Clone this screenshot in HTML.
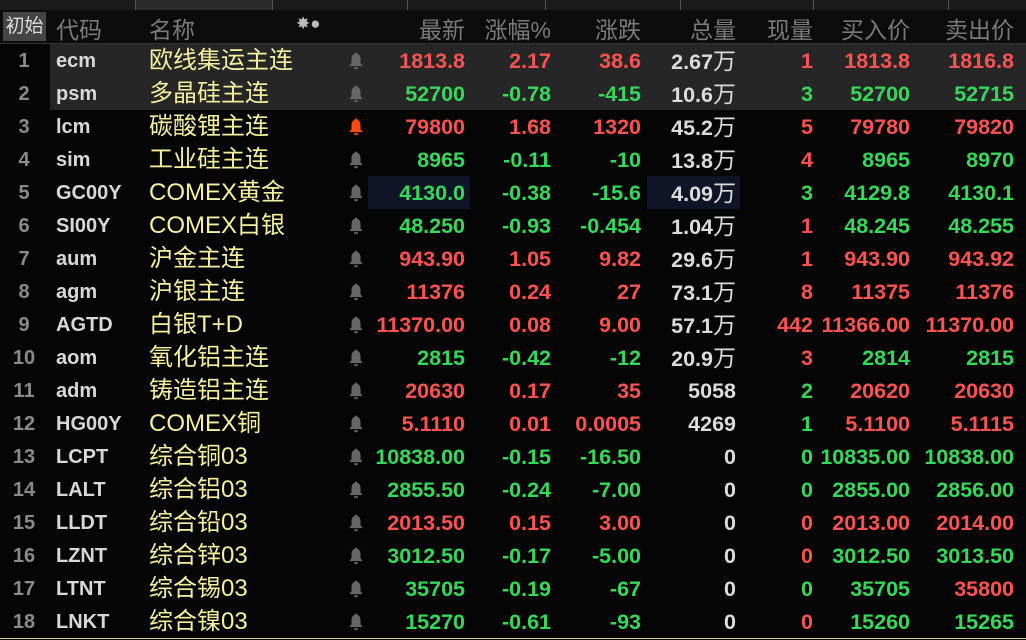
<!DOCTYPE html><html><head><meta charset="utf-8"><style>
body{margin:0;width:1026px;height:640px;background:#050505;overflow:hidden;font-family:"Liberation Sans","Noto Sans CJK SC",sans-serif;position:relative}
.tabs{position:absolute;left:0;top:0;width:1026px;height:10px;background:#1a1a1a}
.tab{position:absolute;top:0;height:10px;border-left:1px solid #555}
.hd{position:absolute;left:0;top:10px;width:1026px;height:33px;background:#0c0c0c;border-bottom:1px solid #333;color:#7a7a7a;font-size:23px}
.hd span,.row span{position:absolute;white-space:nowrap}
.hd span{top:1px}
.row{position:absolute;left:0;width:1026px;height:33px;font-size:21.5px;font-weight:bold;line-height:34px}
.hl{background:#262626;position:absolute;left:50px;top:0;width:976px;height:33px}
.i{left:0;width:48px;text-align:center;color:#8a8a8a;font-size:20px}
.c{left:56px;color:#d8d8d8;font-size:20px}
.nm{left:149px;color:#f4f0a0;font-weight:normal;font-size:24px}
.b{position:absolute;left:348px;top:8px;width:16px;height:18px}
.c1{right:561px}.c2{right:475px}.c3{right:385px}.c4{right:290px;color:#dcdcdc}.c5{right:213px}.c6{right:116px}.c7{right:12px}
.w{font-weight:normal;font-size:23px}
.r{color:#ff5252}.g{color:#35d85a}
.box{position:absolute;top:0;height:33px;background:#0f1526}
</style></head><body>
<div class="tabs"><div class="tab" style="left:135px;width:136px;background:#2a2a2a;border-right:1px solid #555"></div><div class="tab" style="left:407px"></div><div class="tab" style="left:545px"></div><div class="tab" style="left:680px"></div><div class="tab" style="left:813px"></div><div class="tab" style="left:948px"></div></div>
<div class="hd">
<span style="left:3px;top:2px;width:43px;height:29px;background:#444;color:#ddd;font-size:19px;line-height:29px;text-align:center">初始</span>
<span style="left:56px">代码</span><span style="left:149px">名称</span>
<span style="left:296px;top:4px;font-size:17px;color:#bbb">✸●</span>
<span style="right:561px">最新</span><span style="right:475px">涨幅%</span><span style="right:385px">涨跌</span><span style="right:290px">总量</span><span style="right:213px">现量</span><span style="right:116px">买入价</span><span style="right:12px">卖出价</span>
</div>
<svg width="0" height="0" style="position:absolute"><defs><symbol id="bell" viewBox="0 0 14 16"><path d="M7 0.5c-.8 0-1.2.6-1.2 1.2C3.8 2.4 3 4.2 3 6.5v3.5L1 12.5h12l-2-2.5V6.5c0-2.3-.8-4.1-2.8-4.8C8.2 1.1 7.8.5 7 .5zM5.2 13.5a1.8 1.8 0 0 0 3.6 0z" fill="currentColor"/></symbol></defs></svg>

<div class="row" style="top:44px"><div class="hl"></div><span class="i">1</span><span class="c">ecm</span><span class="nm">欧线集运主连</span><svg class="b" style="color:#666"><use href="#bell"/></svg><span class="c1 r">1813.8</span><span class="c2 r">2.17</span><span class="c3 r">38.6</span><span class="c4">2.67<span class="w" style="position:static">万</span></span><span class="c5 r">1</span><span class="c6 r">1813.8</span><span class="c7 r">1816.8</span></div>
<div class="row" style="top:77px"><div class="hl"></div><span class="i">2</span><span class="c">psm</span><span class="nm">多晶硅主连</span><svg class="b" style="color:#666"><use href="#bell"/></svg><span class="c1 g">52700</span><span class="c2 g">-0.78</span><span class="c3 g">-415</span><span class="c4">10.6<span class="w" style="position:static">万</span></span><span class="c5 g">3</span><span class="c6 g">52700</span><span class="c7 g">52715</span></div>
<div class="row" style="top:110px"><span class="i">3</span><span class="c">lcm</span><span class="nm">碳酸锂主连</span><svg class="b" style="color:#ff4a10"><use href="#bell"/></svg><span class="c1 r">79800</span><span class="c2 r">1.68</span><span class="c3 r">1320</span><span class="c4">45.2<span class="w" style="position:static">万</span></span><span class="c5 r">5</span><span class="c6 r">79780</span><span class="c7 r">79820</span></div>
<div class="row" style="top:143px"><span class="i">4</span><span class="c">sim</span><span class="nm">工业硅主连</span><svg class="b" style="color:#666"><use href="#bell"/></svg><span class="c1 g">8965</span><span class="c2 g">-0.11</span><span class="c3 g">-10</span><span class="c4">13.8<span class="w" style="position:static">万</span></span><span class="c5 r">4</span><span class="c6 g">8965</span><span class="c7 g">8970</span></div>
<div class="row" style="top:176px"><div class="box" style="left:368px;width:102px"></div><div class="box" style="left:647px;width:93px"></div><span class="i">5</span><span class="c">GC00Y</span><span class="nm">COMEX黄金</span><svg class="b" style="color:#666"><use href="#bell"/></svg><span class="c1 g">4130.0</span><span class="c2 g">-0.38</span><span class="c3 g">-15.6</span><span class="c4">4.09<span class="w" style="position:static">万</span></span><span class="c5 g">3</span><span class="c6 g">4129.8</span><span class="c7 g">4130.1</span></div>
<div class="row" style="top:209px"><span class="i">6</span><span class="c">SI00Y</span><span class="nm">COMEX白银</span><svg class="b" style="color:#666"><use href="#bell"/></svg><span class="c1 g">48.250</span><span class="c2 g">-0.93</span><span class="c3 g">-0.454</span><span class="c4">1.04<span class="w" style="position:static">万</span></span><span class="c5 r">1</span><span class="c6 g">48.245</span><span class="c7 g">48.255</span></div>
<div class="row" style="top:242px"><span class="i">7</span><span class="c">aum</span><span class="nm">沪金主连</span><svg class="b" style="color:#666"><use href="#bell"/></svg><span class="c1 r">943.90</span><span class="c2 r">1.05</span><span class="c3 r">9.82</span><span class="c4">29.6<span class="w" style="position:static">万</span></span><span class="c5 r">1</span><span class="c6 r">943.90</span><span class="c7 r">943.92</span></div>
<div class="row" style="top:275px"><span class="i">8</span><span class="c">agm</span><span class="nm">沪银主连</span><svg class="b" style="color:#666"><use href="#bell"/></svg><span class="c1 r">11376</span><span class="c2 r">0.24</span><span class="c3 r">27</span><span class="c4">73.1<span class="w" style="position:static">万</span></span><span class="c5 r">8</span><span class="c6 r">11375</span><span class="c7 r">11376</span></div>
<div class="row" style="top:308px"><span class="i">9</span><span class="c">AGTD</span><span class="nm">白银T+D</span><svg class="b" style="color:#666"><use href="#bell"/></svg><span class="c1 r">11370.00</span><span class="c2 r">0.08</span><span class="c3 r">9.00</span><span class="c4">57.1<span class="w" style="position:static">万</span></span><span class="c5 r">442</span><span class="c6 r">11366.00</span><span class="c7 r">11370.00</span></div>
<div class="row" style="top:341px"><span class="i">10</span><span class="c">aom</span><span class="nm">氧化铝主连</span><svg class="b" style="color:#666"><use href="#bell"/></svg><span class="c1 g">2815</span><span class="c2 g">-0.42</span><span class="c3 g">-12</span><span class="c4">20.9<span class="w" style="position:static">万</span></span><span class="c5 r">3</span><span class="c6 g">2814</span><span class="c7 g">2815</span></div>
<div class="row" style="top:374px"><span class="i">11</span><span class="c">adm</span><span class="nm">铸造铝主连</span><svg class="b" style="color:#666"><use href="#bell"/></svg><span class="c1 r">20630</span><span class="c2 r">0.17</span><span class="c3 r">35</span><span class="c4">5058</span><span class="c5 g">2</span><span class="c6 r">20620</span><span class="c7 r">20630</span></div>
<div class="row" style="top:407px"><span class="i">12</span><span class="c">HG00Y</span><span class="nm">COMEX铜</span><svg class="b" style="color:#666"><use href="#bell"/></svg><span class="c1 r">5.1110</span><span class="c2 r">0.01</span><span class="c3 r">0.0005</span><span class="c4">4269</span><span class="c5 g">1</span><span class="c6 r">5.1100</span><span class="c7 r">5.1115</span></div>
<div class="row" style="top:440px"><span class="i">13</span><span class="c">LCPT</span><span class="nm">综合铜03</span><svg class="b" style="color:#666"><use href="#bell"/></svg><span class="c1 g">10838.00</span><span class="c2 g">-0.15</span><span class="c3 g">-16.50</span><span class="c4">0</span><span class="c5 g">0</span><span class="c6 g">10835.00</span><span class="c7 g">10838.00</span></div>
<div class="row" style="top:473px"><span class="i">14</span><span class="c">LALT</span><span class="nm">综合铝03</span><svg class="b" style="color:#666"><use href="#bell"/></svg><span class="c1 g">2855.50</span><span class="c2 g">-0.24</span><span class="c3 g">-7.00</span><span class="c4">0</span><span class="c5 g">0</span><span class="c6 g">2855.00</span><span class="c7 g">2856.00</span></div>
<div class="row" style="top:506px"><span class="i">15</span><span class="c">LLDT</span><span class="nm">综合铅03</span><svg class="b" style="color:#666"><use href="#bell"/></svg><span class="c1 r">2013.50</span><span class="c2 r">0.15</span><span class="c3 r">3.00</span><span class="c4">0</span><span class="c5 r">0</span><span class="c6 r">2013.00</span><span class="c7 r">2014.00</span></div>
<div class="row" style="top:539px"><span class="i">16</span><span class="c">LZNT</span><span class="nm">综合锌03</span><svg class="b" style="color:#666"><use href="#bell"/></svg><span class="c1 g">3012.50</span><span class="c2 g">-0.17</span><span class="c3 g">-5.00</span><span class="c4">0</span><span class="c5 r">0</span><span class="c6 g">3012.50</span><span class="c7 g">3013.50</span></div>
<div class="row" style="top:572px"><span class="i">17</span><span class="c">LTNT</span><span class="nm">综合锡03</span><svg class="b" style="color:#666"><use href="#bell"/></svg><span class="c1 g">35705</span><span class="c2 g">-0.19</span><span class="c3 g">-67</span><span class="c4">0</span><span class="c5 g">0</span><span class="c6 g">35705</span><span class="c7 r">35800</span></div>
<div class="row" style="top:605px"><span class="i">18</span><span class="c">LNKT</span><span class="nm">综合镍03</span><svg class="b" style="color:#666"><use href="#bell"/></svg><span class="c1 g">15270</span><span class="c2 g">-0.61</span><span class="c3 g">-93</span><span class="c4">0</span><span class="c5 r">0</span><span class="c6 g">15260</span><span class="c7 g">15265</span></div>
<div style="position:absolute;left:0;top:638px;width:1026px;height:1px;background:#d8d49a"></div>
</body></html>
